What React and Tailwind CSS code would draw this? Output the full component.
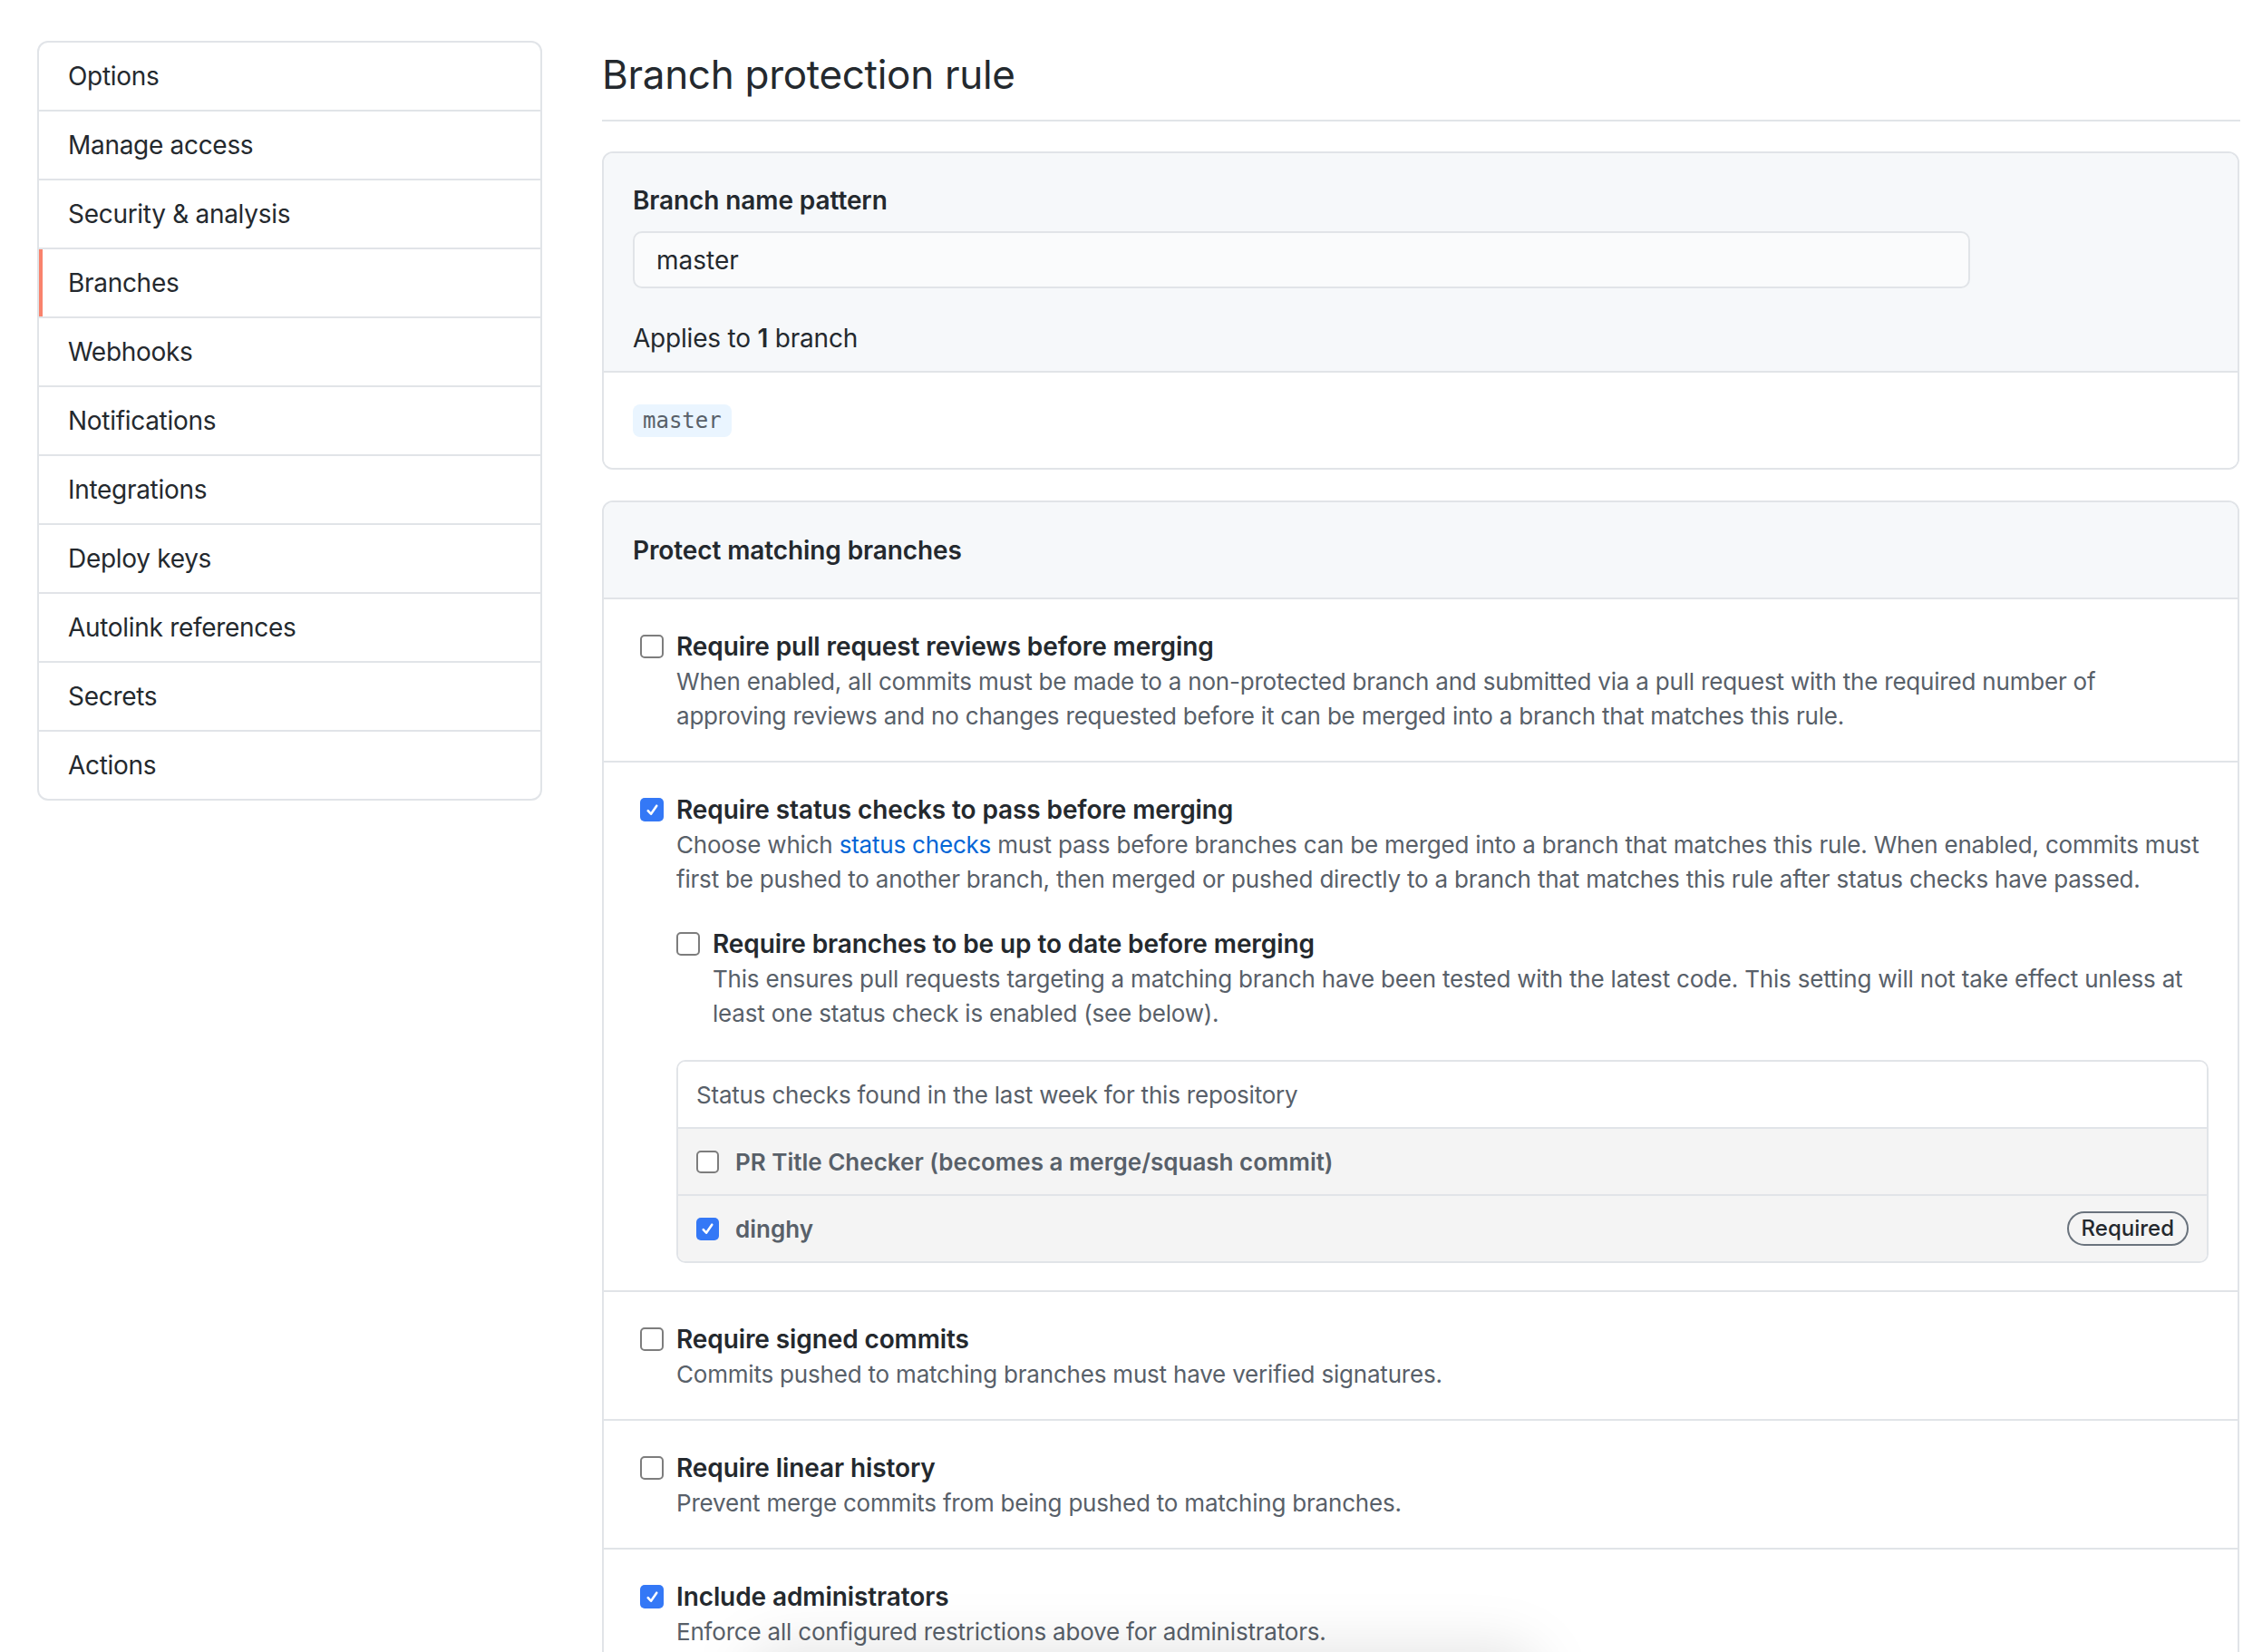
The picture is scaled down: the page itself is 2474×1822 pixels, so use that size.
import React from 'react';

const navItems = [
    'Options',
    'Manage access',
    'Security & analysis',
    'Branches',
    'Webhooks',
    'Notifications',
    'Integrations',
    'Deploy keys',
    'Autolink references',
    'Secrets',
    'Actions',
];

const Checkbox = ({ checked, size = 'w-[26px] h-[26px]' }) => {
    if (checked) {
        return (
            <span className={`${size} shrink-0 rounded-[5px] bg-[#3478f6] flex items-center justify-center`}>
                <svg viewBox="0 0 16 16" className="w-[17px] h-[17px]" fill="none">
                    <path d="M3.5 8.6 L6.6 12 L12.5 3.5" stroke="white" strokeWidth="2.4" strokeLinecap="round" strokeLinejoin="round" />
                </svg>
            </span>
        );
    }
    return <span className={`${size} shrink-0 rounded-[5px] border-2 border-[#7d7d7d] bg-white`} />;
};

const Rule = ({ checked, title, children, nested }) => (
    <div className="flex items-start">
        <div className="h-[40px] flex items-center">
            <Checkbox checked={checked} />
        </div>
        <div className="ml-[14px] flex-1">
            <div className="text-[28px] leading-[40px] font-semibold text-[#24292e] tracking-[-0.1px]">{title}</div>
            <div className="text-[26px] leading-[38px] text-[#586069] tracking-[-0.2px]">{children}</div>
            {nested}
        </div>
    </div>
);

const Section = ({ children, last }) => (
    <div className={`pl-[40px] pr-[32px] pt-[32px] pb-[30px] ${last ? '' : 'border-b-2 border-[#e1e4e8]'}`}>
        {children}
    </div>
);

const StatusChecks = () => (
    <div className="mt-[32px] border-2 border-[#e1e4e8] rounded-[10px] overflow-hidden">
        <div className="h-[72px] px-[20px] flex items-center bg-white text-[26px] text-[#586069] tracking-[-0.2px]">
            Status checks found in the last week for this repository
        </div>
        <div className="h-[74px] px-[20px] flex items-center bg-[#f4f4f4] border-t-2 border-[#e1e4e8]">
            <Checkbox checked={false} size="w-[25px] h-[25px]" />
            <span className="ml-[18px] text-[26px] font-semibold text-[#586069]">
                PR Title Checker (becomes a merge/squash commit)
            </span>
        </div>
        <div className="h-[74px] px-[20px] flex items-center bg-[#f4f4f4] border-t-2 border-[#e1e4e8]">
            <Checkbox checked size="w-[25px] h-[25px]" />
            <span className="ml-[18px] text-[26px] font-semibold text-[#586069]">dinghy</span>
            <span className="ml-auto h-[38px] px-[14px] rounded-full border-2 border-[#6a737d] flex items-center text-[24px] font-medium text-[#24292e]">
                Required
            </span>
        </div>
    </div>
);

export default function App() {
    return (
        <div className="relative bg-white font-['Inter',sans-serif] text-[#24292e] flex pl-[41px] pr-[3px] overflow-hidden h-[1822px]">
            <nav className="mt-[45px] w-[557px] shrink-0 self-start border-2 border-[#e1e4e8] rounded-[12px] overflow-hidden">
                {navItems.map((item, i) => (
                    <div
                        key={item}
                        className={`relative px-[32px] flex items-center text-[28px] text-[#24292e] tracking-[-0.3px] ${
                            i < navItems.length - 1 ? 'h-[76px] border-b-2 border-[#e1e4e8]' : 'h-[74px]'
                        }`}
                    >
                        {item === 'Branches' && <span className="absolute left-0 top-0 bottom-0 w-[4px] bg-[#f9826c]" />}
                        {item}
                    </div>
                ))}
            </nav>

            <main className="ml-[66px] flex-1 pt-[55px]">
                <h1 className="text-[44px] leading-[55px] font-normal tracking-[-0.3px] pb-[22px] border-b-2 border-[#e1e4e8]">
                    Branch protection rule
                </h1>

                <div className="mt-[33px] mr-[1px] border-2 border-[#e1e4e8] rounded-[12px] overflow-hidden">
                    <div className="bg-[#f6f8fa] px-[32px] pt-[32px] pb-[16px] border-b-2 border-[#e1e4e8]">
                        <div className="text-[28px] leading-[40px] font-semibold tracking-[-0.1px]">Branch name pattern</div>
                        <div className="mt-[14px] w-[1475px] h-[63px] rounded-[10px] border-2 border-[#e1e4e8] bg-[#fafbfc] px-[24px] flex items-center text-[28px]">
                            master
                        </div>
                        <div className="mt-[35px] text-[28px] leading-[40px] tracking-[-0.2px]">
                            Applies to <span className="font-semibold">1</span> branch
                        </div>
                    </div>
                    <div className="h-[105px] px-[32px] flex items-center bg-white">
                        <span className="h-[36px] px-[11px] rounded-[8px] bg-[#eaf5ff] flex items-center font-['DejaVu_Sans_Mono',monospace] text-[24px] text-[#586069]">
                            master
                        </span>
                    </div>
                </div>

                <div className="mt-[34px] mr-[1px] border-2 border-[#e1e4e8] rounded-t-[12px] overflow-hidden">
                    <div className="h-[107px] bg-[#f6f8fa] px-[32px] flex items-center border-b-2 border-[#e1e4e8]">
                        <span className="text-[28px] font-semibold tracking-[-0.1px]">Protect matching branches</span>
                    </div>

                    <Section>
                        <Rule title="Require pull request reviews before merging">
                            When enabled, all commits must be made to a non-protected branch and submitted via a pull request with the required number of approving reviews and no changes requested before it can be merged into a branch that matches this rule.
                        </Rule>
                    </Section>

                    <Section>
                        <Rule
                            checked
                            title="Require status checks to pass before merging"
                            nested={
                                <>
                                    <div className="mt-[32px] flex items-start">
                                        <div className="h-[40px] flex items-center">
                                            <Checkbox checked={false} />
                                        </div>
                                        <div className="ml-[14px] flex-1">
                                            <div className="text-[28px] leading-[40px] font-semibold tracking-[-0.1px]">
                                                Require branches to be up to date before merging
                                            </div>
                                            <div className="text-[26px] leading-[38px] text-[#586069] tracking-[-0.2px]">
                                                This ensures pull requests targeting a matching branch have been tested with the latest code. This setting will not take effect unless at least one status check is enabled (see below).
                                            </div>
                                        </div>
                                    </div>
                                    <StatusChecks />
                                </>
                            }
                        >
                            Choose which <a className="text-[#0366d6]">status checks</a> must pass before branches can be merged into a branch that matches this rule. When enabled, commits must first be pushed to another branch, then merged or pushed directly to a branch that matches this rule after status checks have passed.
                        </Rule>
                    </Section>

                    <Section>
                        <Rule title="Require signed commits">
                            Commits pushed to matching branches must have verified signatures.
                        </Rule>
                    </Section>

                    <Section>
                        <Rule title="Require linear history">
                            Prevent merge commits from being pushed to matching branches.
                        </Rule>
                    </Section>

                    <Section last>
                        <Rule checked title="Include administrators">
                            Enforce all configured restrictions above for administrators.
                        </Rule>
                    </Section>
                </div>
            </main>

            <div className="pointer-events-none absolute left-[820px] top-[1815px] w-[880px] h-[90px] rounded-full bg-black/10 blur-[30px]" />
        </div>
    );
}
